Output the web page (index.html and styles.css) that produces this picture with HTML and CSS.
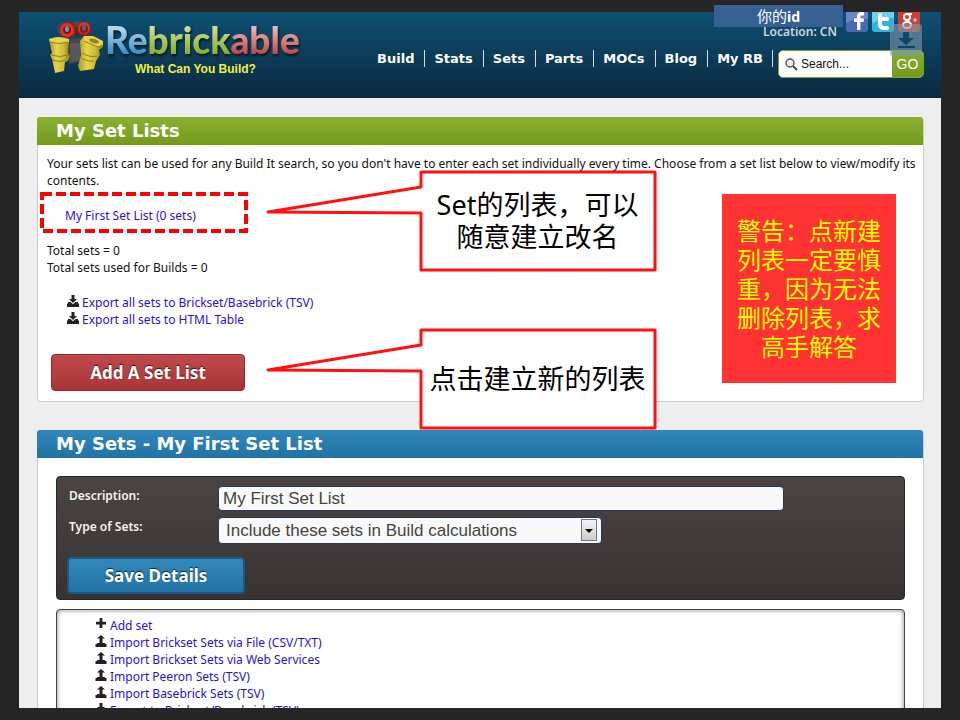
FILE: index.html
```html
<!DOCTYPE html>
<html lang="en">
<head>
  <meta charset="UTF-8">
  <meta name="viewport" content="width=device-width, initial-scale=1">
  <title>Rebrickable - My Set Lists</title>
  <link rel="stylesheet" href="styles.css">
</head>
<body>
  <!-- shared icon shapes -->
  <svg class="sprite" aria-hidden="true">
    <symbol id="icon-download" viewBox="0 0 12 12">
      <path d="M4.500 0h3v4H10L6 8 2 4h2.500zM1 7h2.500L6 9.200 8.500 7H11v1.500h1V12H0V8.500h1z"/>
    </symbol>
    <symbol id="icon-upload" viewBox="0 0 12 12">
      <path d="M6 0l4 3.600H7.500V8H10v1h1.500v3H.5V9H2V8h2.500V3.600H2z"/>
    </symbol>
    <symbol id="icon-plus" viewBox="0 0 12 12">
      <path d="M4.600 0h2.800v3.800H11v2.600H7.400V10H4.600V6.400H1V3.800h3.600z"/>
    </symbol>
  </svg>

  <div class="user-id">你的<b>id</b></div>

  <div class="page">
    <header class="header">
      <a class="logo" href="#" aria-label="Rebrickable">
        <svg width="256" height="64" viewBox="0 0 256 64">
          <defs>
            <linearGradient id="blue" gradientUnits="userSpaceOnUse" x1="0" y1="8" x2="0" y2="36">
              <stop offset="0" stop-color="#b4d6ec"/><stop offset="1" stop-color="#2f86c0"/>
            </linearGradient>
            <linearGradient id="green" gradientUnits="userSpaceOnUse" x1="0" y1="8" x2="0" y2="36">
              <stop offset="0" stop-color="#c9dd92"/><stop offset="1" stop-color="#80ab22"/>
            </linearGradient>
            <linearGradient id="red" gradientUnits="userSpaceOnUse" x1="0" y1="8" x2="0" y2="36">
              <stop offset="0" stop-color="#e9b9b6"/><stop offset="1" stop-color="#bd3d3e"/>
            </linearGradient>
            <linearGradient id="brick" x1="0" x2="1" y1="0" y2="0">
              <stop offset="0" stop-color="#a99820"/><stop offset=".35" stop-color="#e6d449"/>
              <stop offset=".7" stop-color="#cdbb34"/><stop offset="1" stop-color="#8b7c17"/>
            </linearGradient>
          </defs>
          <!-- brick binoculars -->
          <path d="M20 19l15-1 1 22-5 2-10 2z" fill="#45464c"/>
          <path d="M22 23h10v17l-10 2z" fill="#56575d"/>
          <ellipse cx="16" cy="9" rx="7" ry="7" fill="#45464c"/>
          <ellipse cx="30" cy="8" rx="7" ry="7" fill="#4b4c52"/>
          <path d="M26 7h8v9h-7z" fill="#333439"/>
          <circle cx="20" cy="10" r="8" fill="#a81813"/>
          <circle cx="19" cy="10" r="7" fill="#e43224"/>
          <circle cx="19" cy="10" r="4" fill="#8f120e"/>
          <ellipse cx="19" cy="9" rx="2" ry="3" fill="#5f9dbf"/>
          <circle cx="36" cy="9" r="7" fill="#a81813"/>
          <circle cx="36" cy="8" r="6" fill="#e43224"/>
          <circle cx="36" cy="9" r="4" fill="#8f120e"/>
          <ellipse cx="36" cy="8" rx="2" ry="3" fill="#3c6f8c"/>
          <path d="M1 19q10-4 20 0l-1 14 2 3-2 5-3 1-1 9-9 2-3-14-2-4 2-2z" fill="url(#brick)"/>
          <path d="M1 19q10-2 20 0v3q-10 3-19 0z" fill="#e4d64e"/>
          <path d="M2 22q9 3 18 0M3 35q9 3 17 0M4 40q8 3 14 0" fill="none" stroke="#8f8119"/>
          <path d="M36 16l19 6v5l-4 3 1 5-4 6-2 8-14 2-2-5 3-11-1-14z" fill="url(#brick)"/>
          <path d="M36 16l9 0 10 5v4l-5 2-14-6z" fill="#e4d64e"/>
          <path d="M36 21l14 6 5-2M34 33q8 5 15 3M33 38q8 4 13 3" fill="none" stroke="#8f8119"/>
          <ellipse cx="46" cy="21" rx="5" ry="2" fill="#918322" transform="rotate(18 46 21)"/>
          <!-- wordmark -->
          <text class="wordmark" x="57" y="34"><tspan fill="url(#blue)">Re</tspan><tspan fill="url(#green)">brick</tspan><tspan fill="url(#red)">able</tspan></text>
          <text class="tagline" x="87" y="53">What Can You Build?</text>
        </svg>
      </a>

      <div class="header-right">
        <div class="top-line">
          <span class="location">Location: CN</span>
          <a class="social" href="#" aria-label="Facebook">
            <svg width="22" height="22" viewBox="0 0 22 22">
              <rect width="22" height="22" rx="3" fill="#4a68b4"/>
              <path d="M0 0h22v9Q11 8 0 13z" fill="#6b86c8"/>
              <path d="M11 20v-8H8V8.600h3V6q0-4 4.500-4H18v3.400h-2q-1.600 0-1.600 1.400v1.800H18l-.5 3.400h-3.100v8z" fill="#fff"/>
            </svg>
          </a>
          <a class="social" href="#" aria-label="Twitter">
            <svg width="22" height="22" viewBox="0 0 22 22">
              <rect width="22" height="22" rx="3" fill="#31b5df"/>
              <path d="M0 0h22v8Q11 8 0 13z" fill="#70d0ec"/>
              <path d="M8 5v9q0 4 4 4h3M8 9h7" fill="none" stroke="#fff" stroke-width="4" stroke-linecap="round"/>
            </svg>
          </a>
          <a class="social" href="#" aria-label="Google Plus">
            <svg width="22" height="22" viewBox="0 0 22 22">
              <rect width="22" height="22" rx="3" fill="#cf3d2e"/>
              <g fill="none" stroke="#fff" stroke-width="2">
                <ellipse cx="9" cy="7" rx="3" ry="3"/>
                <ellipse cx="9" cy="15" rx="4" ry="3"/>
                <path d="M9 4h5M10 10l2 3"/>
                <path d="M15 10h4M17 8v4" stroke-width="1"/>
              </g>
            </svg>
          </a>
        </div>
        <div class="nav-line">
          <nav class="nav">
            <a href="#">Build</a>
            <a href="#">Stats</a>
            <a href="#">Sets</a>
            <a href="#">Parts</a>
            <a href="#">MOCs</a>
            <a href="#">Blog</a>
            <a href="#">My RB</a>
          </nav>
          <form class="search">
            <svg width="13" height="13" viewBox="0 0 13 13" aria-hidden="true">
              <circle cx="5" cy="5" r="4" fill="#e4edf2" stroke="#555" stroke-width="1.500"/>
              <path d="M8 8l4 4" stroke="#444" stroke-width="2"/>
            </svg>
            <input type="text" placeholder="Search..." aria-label="Search">
            <button type="button">GO</button>
          </form>
        </div>
      </div>
      <div class="download-badge">
        <svg width="32" height="32" viewBox="0 0 32 32" aria-hidden="true">
          <path d="M13 8h6v6h5l-8 7-8-7h5zM8 22h17v2H8z" fill="#0e4a68"/>
        </svg>
      </div>
    </header>

    <main class="content">
      <section class="panel">
        <h2 class="panel-title green">My Set Lists</h2>
        <div class="panel-body">
          <p>Your sets list can be used for any Build It search, so you don't have to enter each set individually every time. Choose from a set list below to view/modify its contents.</p>
          <div class="set-list">
            <svg class="dashes" aria-hidden="true"><rect x="2" y="2"/></svg>
            <a href="#">My First Set List (0 sets)</a>
          </div>
          <p class="totals">Total sets = 0<br>Total sets used for Builds = 0</p>
          <ul class="links">
            <li><svg class="icon"><use href="#icon-download"/></svg><a href="#">Export all sets to Brickset/Basebrick (TSV)</a></li>
            <li><svg class="icon"><use href="#icon-download"/></svg><a href="#">Export all sets to HTML Table</a></li>
          </ul>
          <button class="btn btn-red" type="button">Add A Set List</button>
        </div>

        <!-- annotations over the panel -->
        <div class="callout callout-list">
          <svg width="392" height="102" viewBox="0 0 392 102" aria-hidden="true">
            <path d="M156 2h234v98H156V43L3 42l153-25z"/>
          </svg>
          <span>Set的列表，可以<br>随意建立改名</span>
        </div>
        <div class="callout callout-add">
          <svg width="392" height="102" viewBox="0 0 392 102" aria-hidden="true">
            <path d="M156 2h234v98H156V43L3 42l153-25z"/>
          </svg>
          <span>点击建立新的列表</span>
        </div>
        <div class="warning">警告：点新建列表一定要慎重，因为无法删除列表，求高手解答</div>
      </section>

      <section class="panel">
        <h2 class="panel-title blue">My Sets - My First Set List</h2>
        <div class="panel-inner">
          <form class="details">
            <label for="description">Description:</label>
            <input id="description" type="text" value="My First Set List">
            <label for="set-type">Type of Sets:</label>
            <div class="select">
              <select id="set-type">
                <option>Include these sets in Build calculations</option>
              </select>
              <span class="arrow"></span>
            </div>
            <button class="btn btn-blue" type="button">Save Details</button>
          </form>
          <div class="actions">
            <ul class="links">
              <li><svg class="icon"><use href="#icon-plus"/></svg><a href="#">Add set</a></li>
              <li><svg class="icon"><use href="#icon-upload"/></svg><a href="#">Import Brickset Sets via File (CSV/TXT)</a></li>
              <li><svg class="icon"><use href="#icon-upload"/></svg><a href="#">Import Brickset Sets via Web Services</a></li>
              <li><svg class="icon"><use href="#icon-upload"/></svg><a href="#">Import Peeron Sets (TSV)</a></li>
              <li><svg class="icon"><use href="#icon-upload"/></svg><a href="#">Import Basebrick Sets (TSV)</a></li>
              <li><svg class="icon"><use href="#icon-download"/></svg><a href="#">Export to Brickset/Basebrick (TSV)</a></li>
            </ul>
          </div>
        </div>
      </section>
    </main>
  </div>
</body>
</html>
```

FILE: styles.css
```css
/* Base styling */
*, *:before, *:after {
  box-sizing: border-box;
}
body {
  margin: 0;
  padding: 12px 19px;
  height: 100vh;
  background: #262626;
  color: #111;
  font-family: "Noto Sans", "Noto Sans CJK SC", sans-serif;
  font-size: 12px;
  line-height: 17px;
  position: relative;
}
a {
  color: #2312e8;
  text-decoration: none;
}
p {
  margin: 0;
}
ul {
  list-style: none;
  margin: 0;
  padding: 0;
}
.sprite {
  position: absolute;
  width: 0;
  height: 0;
}
.page {
  height: 100%;
  overflow: hidden;
  background: #eee;
}

/* Header */
.header {
  position: relative;
  display: flex;
  justify-content: space-between;
  height: 86px;
  padding-right: 17px;
  background: linear-gradient(#0e5073, #0a2a40);
  border-bottom: 1px solid #0a2436;
}
.logo {
  padding: 8px 0 0 29px;
}
.logo svg {
  display: block;
}
.wordmark {
  font-family: Lato, sans-serif;
  font-weight: 900;
  font-size: 37px;
  filter: drop-shadow(1px 2px 1px #061722);
}
.tagline {
  font-family: "Liberation Sans", Arial, sans-serif;
  font-weight: bold;
  font-size: 12px;
  fill: #eef23a;
}
.header-right {
  display: flex;
  flex-direction: column;
}
.top-line {
  display: flex;
  justify-content: flex-end;
  gap: 4px;
  height: 38px;
  padding-right: 4px;
}
.location {
  margin-right: 5px;
  padding-top: 11px;
  color: #cdd6dc;
  font-weight: 600;
}
.social svg {
  display: block;
  margin-top: -2px;
}
.nav-line {
  display: flex;
  align-items: flex-start;
  justify-content: flex-end;
}
.nav {
  display: flex;
}
.nav a {
  margin-right: 9px;
  padding-right: 10px;
  border-right: 1px solid #d5dde2;
  color: #fff;
  font-family: "DejaVu Sans", sans-serif;
  font-size: 13px;
  font-weight: bold;
}
.nav a:last-child {
  margin-right: 5px;
  padding-right: 9px;
}
.search {
  display: flex;
  align-items: center;
  height: 28px;
  border: 1px solid #7da428;
  border-radius: 5px;
  background: #fff;
  overflow: hidden;
}
.search svg {
  margin: 0 3px 0 6px;
}
.search input {
  width: 91px;
  padding: 0;
  border: 0;
  outline: 0;
  background: none;
  font: 12px "Liberation Sans", Arial, sans-serif;
}
.search input::placeholder {
  color: #111;
}
.search button {
  width: 31px;
  height: 28px;
  padding: 0;
  border: 0;
  background: linear-gradient(#8aad2e, #749a1b);
  color: #fff;
  font: 14px "Liberation Sans", Arial, sans-serif;
}
.download-badge {
  position: absolute;
  top: 12px;
  right: 19px;
  height: 32px;
  border-radius: 3px;
  background: #7b9caf;
  opacity: 0.6;
}
.user-id {
  position: absolute;
  top: 5px;
  right: 117px;
  z-index: 2;
  width: 129px;
  height: 22px;
  background: #376092;
  color: #fff;
  font-size: 15px;
  line-height: 22px;
  text-align: center;
}
.user-id b {
  font-size: 14px;
}

/* Panels */
.content {
  display: flex;
  flex-direction: column;
  gap: 28px;
  padding: 19px 17px 0 18px;
}
.panel {
  position: relative;
  border: 1px solid #ccc;
  border-radius: 4px;
  background: #fff;
}
.panel-title {
  margin: -1px 0 0 -1px;
  padding-left: 19px;
  border-radius: 3px 3px 0 0;
  color: #fff;
  font-family: "DejaVu Sans", sans-serif;
  font-size: 18px;
  line-height: 28px;
}
.green {
  background: linear-gradient(#8ab030, #759b1c);
}
.blue {
  background: linear-gradient(#3087bb, #2373a5);
}
.panel-body {
  padding: 10px 4px 10px 9px;
}
.set-list {
  position: relative;
  width: 208px;
  height: 41px;
  margin: 3px 0 9px -7px;
  padding: 15px 0 0 25px;
}
.dashes {
  position: absolute;
  top: 0;
  left: 0;
  width: 100%;
  height: 100%;
}
.dashes rect {
  width: calc(100% - 4px);
  height: calc(100% - 4px);
  fill: none;
  stroke: #f00;
  stroke-width: 4px;
  stroke-dasharray: 10 4;
}
.links a {
  margin-left: 3px;
}
.icon {
  width: 12px;
  height: 12px;
  fill: #222;
}
.panel-body .links {
  margin: 18px 0 26px 20px;
}
.btn {
  display: block;
  height: 37px;
  padding: 0;
  border-radius: 4px;
  color: #fff;
  font: bold 17px "Noto Sans", sans-serif;
  text-shadow: 0 -1px 1px rgba(0, 0, 0, 0.7);
}
.btn-red {
  width: 194px;
  margin-left: 4px;
  border: 1px solid #98292b;
  background: linear-gradient(#c04a4b, #a83536);
}
.btn-blue {
  grid-column: 1 / 3;
  width: 178px;
  margin-top: 7px;
  border: 2px solid #1a5a80;
  background: linear-gradient(#3388bb, #2373a5);
}

/* Annotations */
.callout {
  position: absolute;
  left: 227px;
  width: 392px;
  height: 102px;
}
.callout svg {
  display: block;
}
.callout path {
  fill: #fff;
  stroke: #f11;
  stroke-width: 3px;
  stroke-linejoin: round;
}
.callout span {
  position: absolute;
  inset: 0 0 0 153px;
  display: flex;
  align-items: center;
  justify-content: center;
  color: #000;
  font-size: 27px;
  line-height: 32px;
  text-align: center;
  white-space: nowrap;
}
.callout-list {
  top: 52px;
}
.callout-add {
  top: 210px;
}
.warning {
  position: absolute;
  top: 76px;
  right: 27px;
  width: 174px;
  padding: 22px 12px;
  background: #f33;
  color: #ff0;
  font-size: 24px;
  line-height: 29px;
  text-align: center;
}

/* Set details */
.panel-inner {
  padding: 18px;
}
.details {
  display: grid;
  grid-template-columns: 151px 1fr;
  gap: 6px 0;
  justify-items: start;
  padding: 9px 10px 5px;
  border: 1px solid #2a2727;
  border-radius: 4px;
  background: linear-gradient(#4a4543, #383332);
}
.details label {
  padding: 1px 0 0 2px;
  color: #f3f3f3;
  font-weight: 600;
}
.details input,
.details select {
  border: 1px solid #27375f;
  border-radius: 4px;
  background: #f9f9f9;
  color: #444;
  font: 17px "Liberation Sans", Arial, sans-serif;
}
.details input {
  width: 566px;
  height: 25px;
  padding: 0 4px;
}
.select {
  position: relative;
}
.details select {
  display: block;
  width: 384px;
  height: 27px;
  padding: 0 7px;
  appearance: none;
}
.arrow {
  position: absolute;
  top: 2px;
  right: 5px;
  width: 16px;
  height: 22px;
  border: 1px solid #777;
  background: linear-gradient(#f3f3f3, #ccc);
  pointer-events: none;
}
.arrow:after {
  content: "";
  position: absolute;
  top: 9px;
  left: 3px;
  border: 4px solid transparent;
  border-top-color: #000;
}
.actions {
  margin-top: 9px;
  padding: 7px 38px;
  border: 1px solid #444;
  border-radius: 4px;
  box-shadow: inset 0 0 5px rgba(0, 0, 0, 0.5);
}
```
